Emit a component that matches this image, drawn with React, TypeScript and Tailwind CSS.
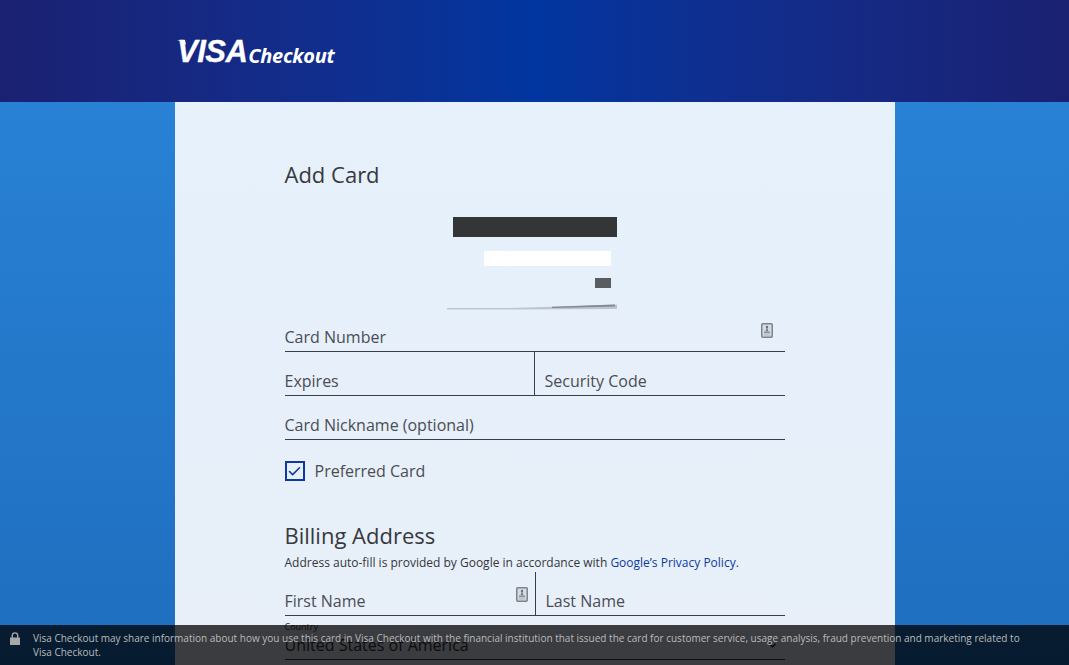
import { Check, ChevronDown } from "lucide-react";

function ContactIcon() {
  return (
    <svg width="12" height="15" viewBox="0 0 12 15" aria-hidden="true">
      <rect x="0.75" y="0.75" width="10.5" height="13.5" rx="1" fill="#d5dbe2" stroke="#7d8389" strokeWidth="1.5" />
      <circle cx="6" cy="4" r="1.2" fill="#6b7176" />
      <path d="M5.3 5.2h1.4l.7 3.3H4.6z" fill="#7d8389" />
      <rect x="3" y="8.5" width="6" height="1.8" fill="#8e949a" />
      <rect x="2.5" y="11.5" width="7" height="1" fill="#b0b5ba" />
    </svg>
  );
}

function LockIcon() {
  return (
    <svg width="10" height="13" viewBox="0 0 10 13" className="shrink-0" aria-hidden="true">
      <path d="M2.3 6V3.6a2.7 2.7 0 0 1 5.4 0V6" fill="none" stroke="#a5a7a9" strokeWidth="1.4" />
      <rect x="0" y="5.5" width="10" height="7.5" fill="#a5a7a9" />
    </svg>
  );
}

function Field({ label, className }: { label: string; className?: string }) {
  return (
    <div className={`flex h-11 items-end border-b border-[#3a3f45] pb-[2px] text-base leading-6 text-[#4a4d52] ${className ?? ""}`}>
      {label}
    </div>
  );
}

function CardArt() {
  return (
    <div className="relative ml-[162px] mt-[28px] h-[93px] w-[172px]">
      <div className="ml-[6px] h-[20px] w-[164px] bg-[#333537]" />
      <div className="ml-[37px] mt-[14px] h-[15px] w-[127px] bg-white" />
      <div className="ml-[148px] mt-[12px] h-[10px] w-[16px] bg-[#5a5d60]" />
      <svg className="absolute bottom-0 left-0" width="172" height="6" viewBox="0 0 172 6" aria-hidden="true">
        <path d="M0 4L60 4L115 2.5L170 0.5L170 5L60 5.5L0 5.5Z" fill="#bcc5d2" />
        <path d="M105 2.8L168 0.5L168 2.4L105 4Z" fill="#85898e" />
      </svg>
    </div>
  );
}

export default function App() {
  return (
    <div className="relative h-[665px] overflow-hidden bg-gradient-to-b from-[#2a85d9] to-[#1f6ebf] font-['Open_Sans',sans-serif]">
      <header className="h-[102px] bg-gradient-to-r from-[#1a2172] via-[#0136a0] to-[#1a2172] pl-[177px]">
        <div className="relative flex items-baseline pt-[34px] italic text-white">
          <svg className="absolute left-0 top-[40px]" width="9" height="5" viewBox="0 0 9 5" aria-hidden="true">
            <path d="M0 0H8L9 5C6.5 2.5 3.5 1 0 0Z" fill="white" />
          </svg>
          <span className="font-['Liberation_Sans',sans-serif] text-[31px] leading-9 font-bold tracking-[-0.5px] [-webkit-text-stroke:0.3px_white]">VISA</span>
          <span className="ml-[1px] translate-y-px font-['Open_Sans',sans-serif] text-[20px] leading-6 font-bold tracking-[-0.3px]">Checkout</span>
        </div>
      </header>

      <main className="mx-auto h-[563px] w-[720px] bg-gradient-to-b from-[#e6f1fb] to-[#e8eff9] px-[110px] pt-[57px]">
        <h1 className="text-[22px] leading-[30px] text-[#36393e]">Add Card</h1>
        <CardArt />

        <div className="relative">
          <Field label="Card Number" className="mt-[-2px]" />
          <div className="absolute right-[12px] top-[15px]">
            <ContactIcon />
          </div>
        </div>
        <div className="flex">
          <Field label="Expires" className="w-[250px] border-r" />
          <Field label="Security Code" className="flex-1 pl-[10px]" />
        </div>
        <Field label="Card Nickname (optional)" />

        <label className="mt-[21px] flex items-center gap-[10px] text-base leading-5 text-[#4a4d52]">
          <span className="flex h-5 w-5 items-center justify-center border-2 border-[#0b3aa0]">
            <Check size={15} strokeWidth={2.5} className="text-[#0b3aa0]" />
          </span>
          Preferred Card
        </label>

        <h2 className="mt-[39px] text-[22px] leading-[30px] text-[#36393e]">Billing Address</h2>
        <p className="mt-[4px] text-xs leading-[18px] text-[#33363a]">
          Address auto-fill is provided by Google in accordance with{" "}
          <span className="text-[#0b3aa0]">Google’s Privacy Policy</span>.
        </p>

        <div className="flex">
          <div className="relative w-[250px]">
            <Field label="First Name" />
            <div className="absolute right-[7px] top-[15px]">
              <ContactIcon />
            </div>
          </div>
          <Field label="Last Name" className="flex-1 border-l pl-[10px]" />
        </div>

        <div className="relative h-[44px] border-b border-[#3a3f45]">
          <p className="pt-[5px] text-[9px] leading-3 text-[#33363a]">Country</p>
          <p className="text-base leading-6 text-[#33363a]">United States of America</p>
          <ChevronDown size={11} strokeWidth={3} className="absolute right-[7px] top-[24px] text-black" />
        </div>
      </main>

      <div className="absolute inset-x-0 bottom-0 flex h-10 bg-black/75 pl-[10px] pt-[7px] text-[10px] leading-[14px] text-[#b9bbbd]">
        <LockIcon />
        <p className="ml-[13px] mt-[-1px] w-[995px]">
          Visa Checkout may share information about how you use this card in Visa Checkout with the financial institution that issued the card for customer service, usage analysis, fraud prevention and marketing related to Visa Checkout.
        </p>
      </div>
    </div>
  );
}
